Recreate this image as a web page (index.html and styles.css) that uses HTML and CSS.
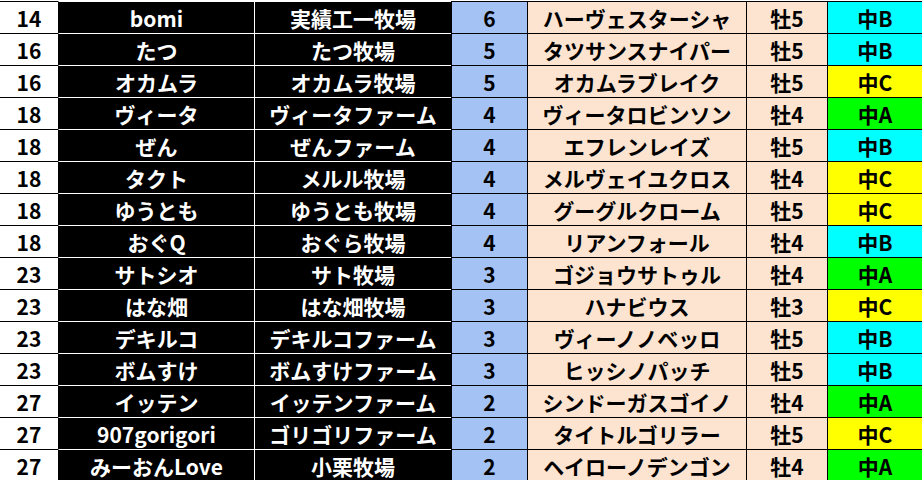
FILE: index.html
```html
<!DOCTYPE html>
<html lang="ja">
<head>
<meta charset="utf-8">
<title>ランキング</title>
<link rel="stylesheet" href="styles.css">
</head>
<body>
<div class="sheet">
  <div class="row"><div class="c rank">14</div><div class="c name">bomi</div><div class="c farm">実績工一牧場</div><div class="c num">6</div><div class="c horse">ハーヴェスターシャ</div><div class="c sex">牡5</div><div class="c cls b">中B</div></div>
  <div class="row"><div class="c rank">16</div><div class="c name">たつ</div><div class="c farm">たつ牧場</div><div class="c num">5</div><div class="c horse">タツサンスナイパー</div><div class="c sex">牡5</div><div class="c cls b">中B</div></div>
  <div class="row"><div class="c rank">16</div><div class="c name">オカムラ</div><div class="c farm">オカムラ牧場</div><div class="c num">5</div><div class="c horse">オカムラブレイク</div><div class="c sex">牡5</div><div class="c cls c3">中C</div></div>
  <div class="row"><div class="c rank">18</div><div class="c name">ヴィータ</div><div class="c farm">ヴィータファーム</div><div class="c num">4</div><div class="c horse">ヴィータロビンソン</div><div class="c sex">牡4</div><div class="c cls a">中A</div></div>
  <div class="row"><div class="c rank">18</div><div class="c name">ぜん</div><div class="c farm">ぜんファーム</div><div class="c num">4</div><div class="c horse">エフレンレイズ</div><div class="c sex">牡5</div><div class="c cls b">中B</div></div>
  <div class="row"><div class="c rank">18</div><div class="c name">タクト</div><div class="c farm">メルル牧場</div><div class="c num">4</div><div class="c horse">メルヴェイユクロス</div><div class="c sex">牡4</div><div class="c cls c3">中C</div></div>
  <div class="row"><div class="c rank">18</div><div class="c name">ゆうとも</div><div class="c farm">ゆうとも牧場</div><div class="c num">4</div><div class="c horse">グーグルクローム</div><div class="c sex">牡5</div><div class="c cls c3">中C</div></div>
  <div class="row"><div class="c rank">18</div><div class="c name">おぐQ</div><div class="c farm">おぐら牧場</div><div class="c num">4</div><div class="c horse">リアンフォール</div><div class="c sex">牡4</div><div class="c cls b">中B</div></div>
  <div class="row"><div class="c rank">23</div><div class="c name">サトシオ</div><div class="c farm">サト牧場</div><div class="c num">3</div><div class="c horse">ゴジョウサトゥル</div><div class="c sex">牡4</div><div class="c cls a">中A</div></div>
  <div class="row"><div class="c rank">23</div><div class="c name">はな畑</div><div class="c farm">はな畑牧場</div><div class="c num">3</div><div class="c horse">ハナビウス</div><div class="c sex">牡3</div><div class="c cls c3">中C</div></div>
  <div class="row"><div class="c rank">23</div><div class="c name">デキルコ</div><div class="c farm">デキルコファーム</div><div class="c num">3</div><div class="c horse">ヴィーノノベッロ</div><div class="c sex">牡5</div><div class="c cls b">中B</div></div>
  <div class="row"><div class="c rank">23</div><div class="c name">ボムすけ</div><div class="c farm">ボムすけファーム</div><div class="c num">3</div><div class="c horse">ヒッシノパッチ</div><div class="c sex">牡5</div><div class="c cls b">中B</div></div>
  <div class="row"><div class="c rank">27</div><div class="c name">イッテン</div><div class="c farm">イッテンファーム</div><div class="c num">2</div><div class="c horse">シンドーガスゴイノ</div><div class="c sex">牡4</div><div class="c cls a">中A</div></div>
  <div class="row"><div class="c rank">27</div><div class="c name">907gorigori</div><div class="c farm">ゴリゴリファーム</div><div class="c num">2</div><div class="c horse">タイトルゴリラー</div><div class="c sex">牡5</div><div class="c cls c3">中C</div></div>
  <div class="row"><div class="c rank">27</div><div class="c name">みーおんLove</div><div class="c farm">小栗牧場</div><div class="c num">2</div><div class="c horse">ヘイローノデンゴン</div><div class="c sex">牡4</div><div class="c cls a">中A</div></div>
</div>
</body>
</html>
```

FILE: styles.css
```css
html, body {
  margin: 0;
  padding: 0;
  overflow: hidden;
  background: #ffffff;
}
body {
  padding-top: 1px;
  font-family: "Noto Sans CJK JP", "Noto Sans", sans-serif;
  font-weight: 700;
  font-size: 21px;
}
.sheet {
  display: flex;
  flex-direction: column;
  width: 922px;
}
.row {
  display: grid;
  grid-template-columns: 58px 196px 197px 76px 219px 81px 95px;
  height: 32px;
}
.c {
  box-sizing: border-box;
  border-top: 1px solid #000;
  border-left: 1px solid #000;
  display: flex;
  align-items: center;
  justify-content: center;
  padding-top: 1px;
  line-height: 1;
  white-space: nowrap;
  overflow: hidden;
  color: #000;
}
.rank {
  border-left: none;
  background: #ffffff;
}
.name {
  background: #000;
  color: #fff;
  border-top-color: #fff;
}
.farm {
  background: #000;
  color: #fff;
  border-top-color: #fff;
  border-left-color: #fff;
}
.num {
  background: #a4c2f4;
}
.horse, .sex {
  background: #fce4d0;
}
.cls.b { background: #00ffff; }
.cls.c3 { background: #ffff00; }
.cls.a { background: #00ff00; }
```
